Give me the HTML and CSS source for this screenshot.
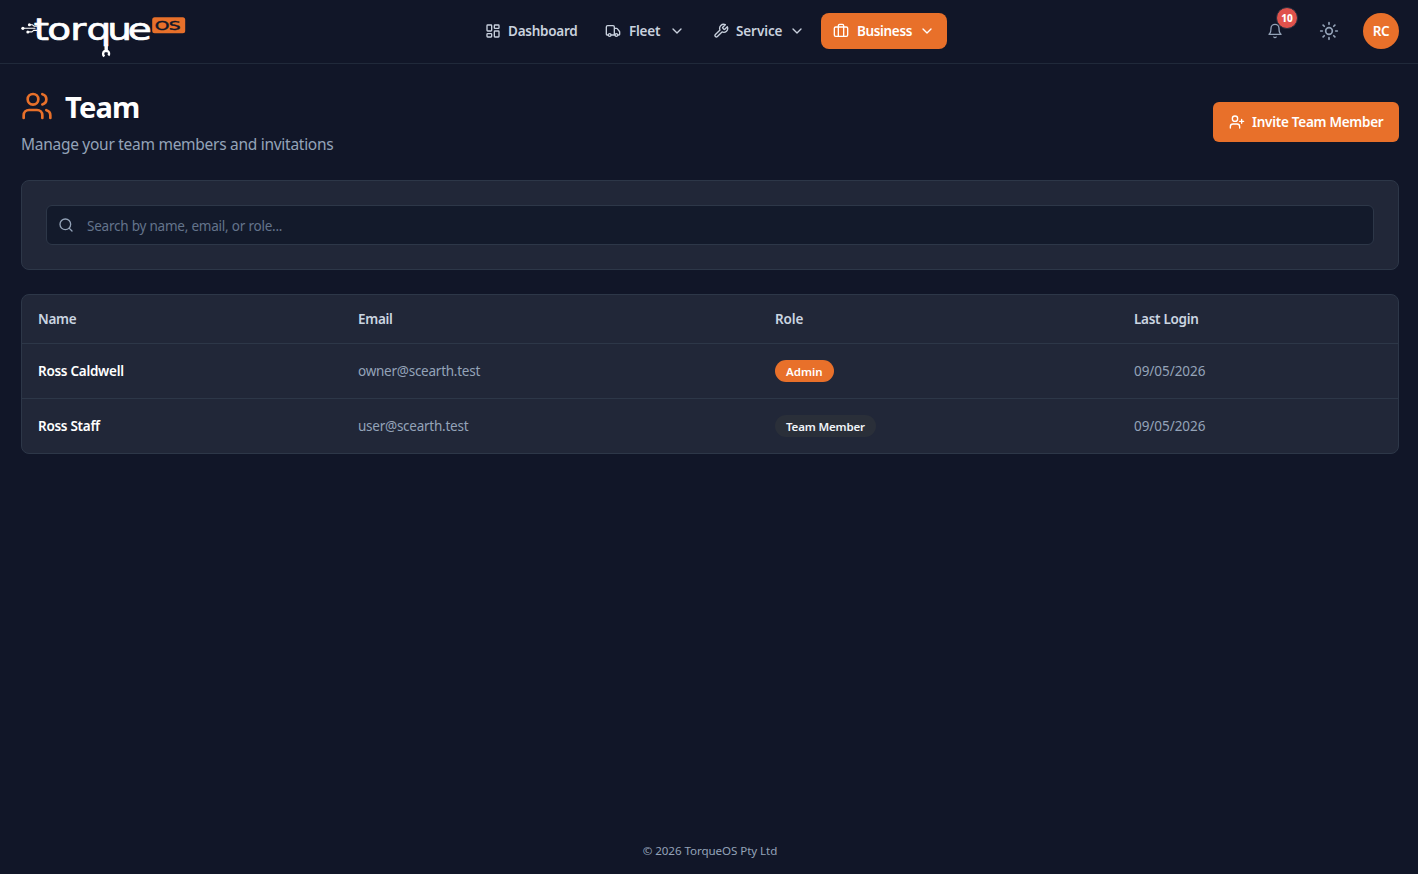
FILE: index.html
```html
<!DOCTYPE html>
<html lang="en">
<head>
<meta charset="utf-8">
<title>Team - TorqueOS</title>
<link rel="stylesheet" href="styles.css">
</head>
<body>
<header class="topbar">
  <a class="brand" aria-label="TorqueOS">
    <svg class="logo" width="166" height="44" viewBox="0 0 166 44">
      <g class="logo-circuit">
        <path d="M2 14.3h12M8.5 10.8h3l1.5 1.4h3M7 17.9h4l1.6-1.5h3"/>
        <circle cx="1.9" cy="14.3" r="1.6"/><circle cx="8.4" cy="10.8" r="1.5"/><circle cx="6.8" cy="17.9" r="1.5"/>
      </g>
      <text class="logo-word" transform="scale(1.3 1)" y="26.2" x="9.8 20.2 37.8 50.4 66.4 82.2">torque</text>
      <path class="logo-wrench" d="M85.2 30v6.5"/>
      <path class="logo-jaw" d="M83.4 42.4a3.2 3.2 0 0 1 .2-5.3h3.2a3.2 3.2 0 0 1 .6 4.5"/>
      <rect class="logo-tag" x="131.2" y="3.3" width="33" height="16" rx="2.5"/>
      <text class="logo-os" transform="scale(1.5 1)" y="15.7" x="89.2 98.5">OS</text>
    </svg>
  </a>
  <nav class="nav">
    <a class="nav-item dashboard"><svg class="i16" viewBox="0 0 24 24"><rect x="3" y="3" width="7" height="9" rx="1"/><rect x="14" y="3" width="7" height="5" rx="1"/><rect x="14" y="12" width="7" height="9" rx="1"/><rect x="3" y="16" width="7" height="5" rx="1"/></svg><span>Dashboard</span></a>
    <a class="nav-item fleet"><svg class="i16" viewBox="0 0 24 24"><path d="M14 18V6a2 2 0 0 0-2-2H4a2 2 0 0 0-2 2v11a1 1 0 0 0 1 1h2M15 18H9M19 18h2a1 1 0 0 0 1-1v-3.65a1 1 0 0 0-.22-.624l-3.48-4.35A1 1 0 0 0 17.52 8H14"/><circle cx="17" cy="18" r="2"/><circle cx="7" cy="18" r="2"/></svg><span>Fleet</span><svg class="i16 chev" viewBox="0 0 24 24"><path d="m6 9 6 6 6-6"/></svg></a>
    <a class="nav-item service"><svg class="i16" viewBox="0 0 24 24"><path d="M14.7 6.3a1 1 0 0 0 0 1.4l1.6 1.6a1 1 0 0 0 1.4 0l3.77-3.77a6 6 0 0 1-7.94 7.94l-6.91 6.91a2.12 2.12 0 0 1-3-3l6.91-6.91a6 6 0 0 1 7.94-7.94l-3.76 3.76z"/></svg><span>Service</span><svg class="i16 chev" viewBox="0 0 24 24"><path d="m6 9 6 6 6-6"/></svg></a>
    <a class="nav-item business active"><svg class="i16" viewBox="0 0 24 24"><path d="M16 20V4a2 2 0 0 0-2-2h-4a2 2 0 0 0-2 2v16"/><rect x="2" y="6" width="20" height="14" rx="2"/></svg><span>Business</span><svg class="i16 chev" viewBox="0 0 24 24"><path d="m6 9 6 6 6-6"/></svg></a>
  </nav>
  <div class="actions">
    <button class="icon-btn"><svg class="i16" viewBox="0 0 24 24"><path d="M6 8a6 6 0 0 1 12 0c0 7 3 9 3 9H3s3-2 3-9M10.3 21a1.94 1.94 0 0 0 3.4 0"/></svg><span class="count">10</span></button>
    <button class="icon-btn sun"><svg class="i20" viewBox="0 0 24 24"><circle cx="12" cy="12" r="4"/><path d="M12 2v2M12 20v2M4.93 4.93l1.41 1.41M17.66 17.66l1.41 1.41M2 12h2M20 12h2M6.34 17.66l-1.41 1.41M19.07 4.93l-1.41 1.41"/></svg></button>
    <span class="avatar">RC</span>
  </div>
</header>
<main class="page">
  <div class="page-head">
    <div>
      <h1 class="title"><svg class="i32" viewBox="0 0 24 24"><path d="M16 21v-2a4 4 0 0 0-4-4H6a4 4 0 0 0-4 4v2"/><circle cx="9" cy="7" r="4"/><path d="M22 21v-2a4 4 0 0 0-3-3.87M16 3.13a4 4 0 0 1 0 7.75"/></svg><span>Team</span></h1>
      <p class="subtitle">Manage your team members and invitations</p>
    </div>
    <button class="invite"><svg class="i16" viewBox="0 0 24 24"><path d="M16 21v-2a4 4 0 0 0-4-4H6a4 4 0 0 0-4 4v2"/><circle cx="9" cy="7" r="4"/><path d="M19 8v6M22 11h-6"/></svg><span>Invite Team Member</span></button>
  </div>
  <section class="card search-card">
    <div class="search"><svg class="i16" viewBox="0 0 24 24"><circle cx="11" cy="11" r="8"/><path d="m21 21-4.3-4.3"/></svg><span>Search by name, email, or role...</span></div>
  </section>
  <section class="card table">
    <div class="row head"><span>Name</span><span>Email</span><span class="c-role">Role</span><span>Last Login</span></div>
    <div class="row"><span class="person">Ross Caldwell</span><span class="mail">owner@scearth.test</span><span><b class="badge admin">Admin</b></span><span class="date">09/05/2026</span></div>
    <div class="row"><span class="person">Ross Staff</span><span class="mail">user@scearth.test</span><span><b class="badge member">Team Member</b></span><span class="date">09/05/2026</span></div>
  </section>
</main>
<footer class="footer"><span>© 2026 TorqueOS Pty Ltd</span></footer>
</body>
</html>
```
FILE: styles.css
```css
* { box-sizing: border-box; }
body {
  margin: 0;
  min-height: 874px;
  display: flex;
  flex-direction: column;
  background: #111628;
  color: #fff;
  font: 13.5px/20px "Noto Sans", "Open Sans", sans-serif;
}
button { border: 0; padding: 0; background: none; color: inherit; font: inherit; }
svg { flex: none; fill: none; stroke: currentColor; stroke-width: 2; stroke-linecap: round; stroke-linejoin: round; }
.i16 { width: 16px; height: 16px; }
.i20 { width: 20px; height: 20px; }
.i32 { width: 32px; height: 32px; }

.topbar {
  height: 64px;
  padding: 0 19px 1px 21px;
  border-bottom: 1px solid #20293a;
  display: grid;
  grid-template-columns: 451.5px 1fr auto;
  align-items: center;
}
.brand { display: block; height: 44px; margin-top: 9px; }
.logo { display: block; stroke: none; overflow: visible; }
.logo-circuit path { stroke: #fff; stroke-width: 1.1; }
.logo-circuit circle { fill: #fff; }
.logo-word { font: 30px "DejaVu Sans", sans-serif; fill: #fff; stroke: #fff; stroke-width: .7; }
.logo-wrench { stroke: #fff; stroke-width: 3.4; stroke-linecap: butt; }
.logo-jaw { stroke: #fff; stroke-width: 2.4; stroke-linecap: butt; }
.logo-tag { fill: #e8702a; }
.logo-os { font: 12.5px "DejaVu Sans", sans-serif; fill: #111628; stroke: #111628; stroke-width: .4; }

.nav { display: flex; gap: 4px; }
.nav-item {
  height: 36px;
  padding: 0 12px;
  border-radius: 8px;
  display: flex;
  align-items: center;
  color: #c9d1de;
  font-weight: 600;
}
.nav-item span { margin-left: 7.5px; letter-spacing: -.25px; }
.nav-item .chev { margin-left: auto; }
.dashboard { width: 116px; }
.fleet { width: 104px; }
.fleet span { margin-left: 8.5px; }
.service { width: 116.5px; }
.service span { letter-spacing: -.1px; }
.business { width: 126px; }
.business span { margin-left: 8px; letter-spacing: -.35px; }
.active { background: #e8702a; color: #fff; }

.actions { display: flex; align-items: center; color: #94a3b8; }
.icon-btn { position: relative; width: 36px; height: 36px; display: grid; place-items: center; }
.sun { margin: 0 16px 0 18px; }
.count {
  position: absolute;
  left: 19px;
  top: -6px;
  width: 22px;
  height: 22px;
  border: 1px solid #26303f;
  border-radius: 50%;
  background: #e0524c;
  color: #fff;
  font-size: 10px;
  font-weight: 800;
  line-height: 21px;
  text-align: center;
}
.avatar {
  width: 36px;
  height: 36px;
  border-radius: 50%;
  background: #e8702a;
  color: #fff;
  font-weight: 600;
  letter-spacing: -.3px;
  line-height: 36px;
  text-align: center;
}

.page { flex: 1; padding: 24px 19px 0 21px; }
.page-head { display: flex; justify-content: space-between; align-items: center; height: 68px; }
.title { margin: 0; height: 36px; display: flex; align-items: center; gap: 12px; font-size: 29px; line-height: 36px; font-weight: 700; letter-spacing: -.8px; }
.title span { padding-top: 2px; }
.title svg { color: #e8702a; }
.subtitle { margin: 8px 0 0; font-size: 15.5px; line-height: 24px; letter-spacing: -.28px; color: #94a3b8; }
.invite {
  width: 186px;
  height: 40px;
  border-radius: 6px;
  background: #e8702a;
  padding-left: 16px;
  display: flex;
  align-items: center;
  gap: 7px;
  font-weight: 600;
  letter-spacing: -.27px;
  white-space: nowrap;
}
.card { border: 1px solid #2d3748; border-radius: 8px; background: #212738; }
.search-card { margin-top: 24px; padding: 24px; }
.search {
  height: 40px;
  padding: 0 11px;
  border: 1px solid #2d3748;
  border-radius: 6px;
  background: #131a2b;
  display: flex;
  align-items: center;
  gap: 13px;
  color: #64748b;
  letter-spacing: -.22px;
}
.search span { padding-top: 2px; }
.search svg { color: #94a3b8; }
.table { margin-top: 24px; }
.row {
  height: 55px;
  padding-left: 16px;
  display: grid;
  grid-template-columns: 320px 417px 359px 1fr;
  align-items: center;
  border-bottom: 1px solid #2d3748;
  color: #94a3b8;
}
.row:last-child { height: 54px; border-bottom: 0; }
.head { height: 49px; color: #cbd5e1; font-weight: 600; letter-spacing: -.3px; }
.c-role { letter-spacing: -.1px; }
.person { color: #fff; font-weight: 600; letter-spacing: -.28px; }
.mail { letter-spacing: -.25px; }
.date { letter-spacing: -.05px; }
.badge { display: block; height: 22px; border-radius: 11px; padding: 0 11px; font-size: 11.5px; line-height: 23px; font-weight: 600; white-space: nowrap; }
.admin { background: #e8702a; color: #fff; width: 59px; }
.member { background: #2a2f39; color: #f1f5f9; width: 101px; letter-spacing: -.15px; }
.footer { height: 48px; padding: 2px 0 0 2px; display: flex; justify-content: center; align-items: center; color: #94a3b8; font-size: 11.6px; letter-spacing: -.07px; }
```
